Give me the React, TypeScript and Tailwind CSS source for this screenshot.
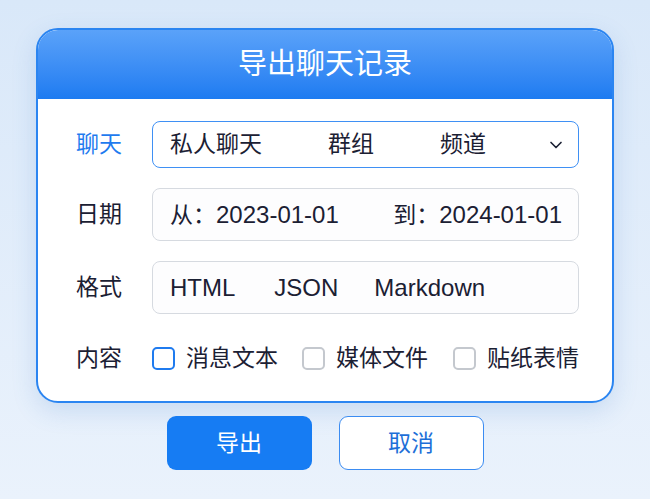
import { ChevronDown } from "lucide-react";

const font = { fontFamily: '"Liberation Sans", "Noto Sans CJK SC", sans-serif' };

const Checkbox = ({ active }: { active?: boolean }) => (
  <span
    className={
      active
        ? "block w-[23px] h-[23px] rounded-[5px] border-2 border-[#1f7bef] bg-white"
        : "block w-[23px] h-[23px] rounded-[5px] border-2 border-[#c4c8ce] bg-white"
    }
  />
);

const App = () => {
  return (
    <div
      className="w-[650px] h-[499px] bg-gradient-to-b from-[#d9e8f9] to-[#eaf2fc] pt-[28px] text-[#1b2033]"
      style={font}
    >
      <div className="mx-auto w-[578px] rounded-[22px] border-2 border-[#2b85f1] bg-white overflow-hidden shadow-[0_8px_24px_rgba(60,120,200,0.18)]">
        <div className="h-[69px] bg-gradient-to-b from-[#5aa2f9] to-[#1c7bf1] flex items-center justify-center">
          <h1 className="text-white text-[29px] leading-none">导出聊天记录</h1>
        </div>
        <div className="pt-[22px] pb-[28px] pl-[38px] pr-[33px] flex flex-col text-[23px] leading-none whitespace-nowrap">
          <div className="flex items-center h-[47px]">
            <div className="w-[76px] shrink-0 text-[#1f7bef]">聊天</div>
            <div className="flex-1 min-w-0 h-full rounded-[8px] border-[1.5px] border-[#3f90f4] bg-white flex items-center pl-[17px] pr-[12px]">
              <div className="flex items-center gap-[66px]">
                <span>私人聊天</span>
                <span>群组</span>
                <span>频道</span>
              </div>
              <ChevronDown className="ml-auto w-[20px] h-[20px] text-[#1b2033]" strokeWidth={2} />
            </div>
          </div>
          <div className="flex items-center h-[53px] mt-[20px]">
            <div className="w-[76px] shrink-0">日期</div>
            <div className="flex-1 h-full rounded-[8px] border border-[#d6dae0] bg-[#fdfdfe] flex items-center justify-between pl-[17px] pr-[16px] text-[24px]">
              <span><span className="text-[23px]">从：</span>2023-01-01</span>
              <span><span className="text-[23px]">到：</span>2024-01-01</span>
            </div>
          </div>
          <div className="flex items-center h-[53px] mt-[20px]">
            <div className="w-[76px] shrink-0">格式</div>
            <div className="flex-1 h-full rounded-[8px] border border-[#d6dae0] bg-[#fdfdfe] flex items-center pl-[17px] text-[24px]">
              <span>HTML</span>
              <span className="ml-[39px]">JSON</span>
              <span className="ml-[36px]">Markdown</span>
            </div>
          </div>
          <div className="flex items-center h-[30px] mt-[29px]">
            <div className="w-[76px] shrink-0">内容</div>
            <div className="flex items-center">
              <Checkbox active />
              <span className="ml-[11px]">消息文本</span>
              <span className="ml-[24px]"><Checkbox /></span>
              <span className="ml-[11px]">媒体文件</span>
              <span className="ml-[25px]"><Checkbox /></span>
              <span className="ml-[11px]">贴纸表情</span>
            </div>
          </div>
        </div>
      </div>
      <div className="flex justify-center gap-[27px] mt-[13px]">
        <button className="w-[145px] h-[54px] rounded-[9px] bg-[#167cf3] text-white text-[23px]">导出</button>
        <button className="w-[145px] h-[54px] rounded-[9px] border-[1.5px] border-[#3b8cf2] bg-white text-[#1d6fd8] text-[23px]">取消</button>
      </div>
    </div>
  );
};

export default App;
